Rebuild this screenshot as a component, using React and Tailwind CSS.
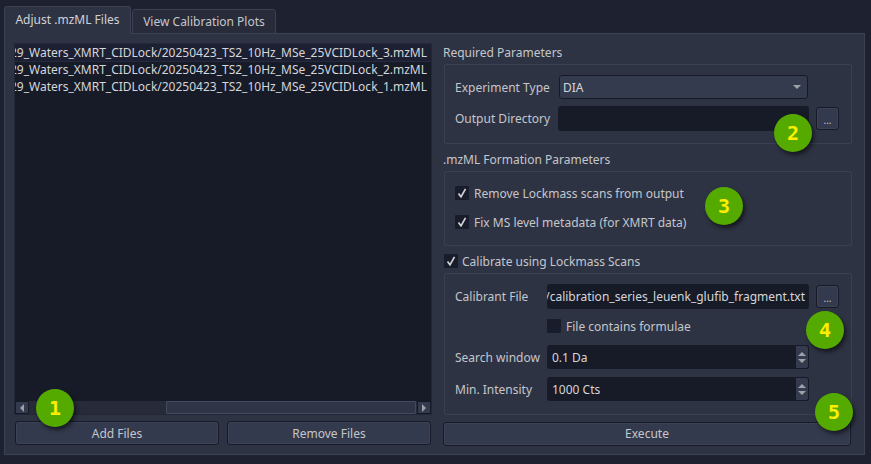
import React from "react";

function Check({ checked = true }) {
  return (
    <span className="w-[14px] h-[14px] bg-[#191d2b] rounded-[1px] flex items-center justify-center shrink-0">
      {checked && (
        <svg width="10" height="10" viewBox="0 0 10 10" fill="none">
          <path d="M1.5 5.5 L4 8.8 L8.5 0.8" stroke="#d3d4d8" strokeWidth="1.7" />
        </svg>
      )}
    </span>
  );
}

function Button({ className, children }) {
  return (
    <div className={"bg-[#343a4d] border border-[#171a26] rounded-[3px] flex items-center justify-center text-[#c4c6cb] shadow-[inset_0_0_0_1px_#3c4257] " + className}>
      {children}
    </div>
  );
}

function Spin({ value, className }) {
  return (
    <div className={"h-[24px] w-[262px] bg-[#171b28] rounded-[3px] flex items-center justify-between text-[#d5d6da] pl-[5px] " + (className || "")}>
      <span>{value}</span>
      <span className="w-[14px] h-[24px] bg-[#353b4e] border border-[#171a26] rounded-r-[3px] flex flex-col items-center justify-center gap-[3px]">
        <span className="w-0 h-0 border-x-[4px] border-x-transparent border-b-[4px] border-b-[#9ea1aa]" />
        <span className="w-0 h-0 border-x-[4px] border-x-transparent border-t-[4px] border-t-[#9ea1aa]" />
      </span>
    </div>
  );
}

function Badge({ n, className }) {
  return (
    <div className={"absolute w-[38px] h-[38px] rounded-full bg-[#55aa00] shadow-[2px_3px_4px_rgba(0,0,0,0.55)] flex items-center justify-center text-[#ffee00] text-[20px] font-bold font-['DejaVu_Sans_Mono',monospace] " + className}>
      {n}
    </div>
  );
}

const Row = ({ n }) => (
  <div className="h-[17px] flex items-center justify-end whitespace-nowrap pr-[4px]">
    29_Waters_XMRT_CIDLock/20250423_TS2_10Hz_MSe_25VCIDLock_{n}.mzML
  </div>
);

export default function App() {
  return (
    <div className="relative w-[871px] h-[464px] bg-[#1e2130] overflow-hidden pt-[6px] pl-[4px] text-[12px] leading-[17px] text-[#c4c6cb] font-['Noto_Sans',sans-serif]">
      <div className="flex items-end h-[28px] -mb-px relative z-10">
        <div className="w-[127px] h-[28px] bg-[#2e3343] border border-[#3b4153] border-b-0 rounded-t-[3px] flex items-center justify-center text-[#d0d1d6] pb-[3px]">
          Adjust .mzML Files
        </div>
        <div className="w-[144px] h-[25px] ml-[1px] bg-[#272b3a] border border-[#3b4153] rounded-t-[3px] flex items-center justify-center text-[#c4c6cb]">
          View Calibration Plots
        </div>
      </div>
      <div className="w-[861px] h-[422px] bg-[#2e3343] border border-[#3b4153] pt-[9px] pl-[9px] flex">
        <div className="w-[418px] flex flex-col">
          <div className="h-[372px] bg-[#171b28] border border-[#232738] flex flex-col">
            <div className="flex-1 min-h-0 overflow-hidden text-[#d5d6da]">
              <div className="bg-[#1d2032] border border-[#262a40] -m-px"><Row n={3} /></div>
              <Row n={2} />
              <Row n={1} />
            </div>
            <div className="h-[14px] flex bg-[#262a39] border-t border-[#171b28]">
              <div className="w-[14px] bg-[#353b4e] border border-[#171a26] flex items-center justify-center">
                <span className="w-0 h-0 border-y-[4px] border-y-transparent border-r-[4px] border-r-[#9ea1aa]" />
              </div>
              <div className="flex-1 ml-[137px] bg-[#2f3446] border border-[#434a5f] rounded-[1px]" />
              <div className="w-[14px] ml-[1px] bg-[#353b4e] border border-[#171a26] flex items-center justify-center">
                <span className="w-0 h-0 border-y-[4px] border-y-transparent border-l-[4px] border-l-[#9ea1aa]" />
              </div>
            </div>
          </div>
          <div className="flex gap-[8px] mt-[6px] pl-[1px] w-[418px]">
            <Button className="w-[204px] h-[24px]">Add Files</Button>
            <Button className="w-[204px] h-[24px]">Remove Files</Button>
          </div>
        </div>

        <div className="ml-[11px] w-[409px] flex flex-col">
          <div className="h-[18px] mb-[3px] flex items-center">Required Parameters</div>
          <div className="h-[80px] ml-[1px] border border-[#3a4053] rounded-[2px] pl-[10px] pt-[10px] flex flex-col">
            <div className="flex items-center h-[24px]">
              <span className="w-[104px]">Experiment Type</span>
              <div className="w-[249px] h-[24px] bg-[#353b4e] border border-[#171a26] rounded-[3px] flex items-center justify-between pl-[3px] pr-[6px] text-[#d5d6da]">
                DIA
                <span className="w-0 h-0 border-x-[4px] border-x-transparent border-t-[4px] border-t-[#9ea1aa]" />
              </div>
            </div>
            <div className="flex items-center h-[25px] mt-[7px]">
              <span className="w-[103px]">Output Directory</span>
              <div className="w-[251px] h-[25px] bg-[#171b28] rounded-[3px]" />
              <Button className="w-[23px] h-[23px] ml-[7px] items-end text-[10px]">...</Button>
            </div>
          </div>

          <div className="h-[20px] mt-[5px] flex items-center">.mzML Formation Parameters</div>
          <div className="h-[75px] ml-[1px] mt-[2px] border border-[#3a4053] rounded-[2px] pl-[10px] pt-[14px] flex flex-col gap-[15px]">
            <label className="flex items-center gap-[5px] h-[14px]"><Check /> Remove Lockmass scans from output</label>
            <label className="flex items-center gap-[5px] h-[14px]"><Check /> Fix MS level metadata (for XMRT data)</label>
          </div>

          <label className="flex items-center gap-[4px] h-[20px] mt-[5px] ml-[1px]"><Check /> Calibrate using Lockmass Scans</label>
          <div className="h-[142px] ml-[1px] mt-[2px] border border-[#3a4053] rounded-[2px] pl-[10px] pt-[10px] flex flex-col">
            <div className="flex items-center h-[25px]">
              <span className="w-[92px]">Calibrant File</span>
              <div className="w-[262px] h-[25px] bg-[#171b28] rounded-[3px] flex items-center justify-end pr-[4px] overflow-hidden whitespace-nowrap text-[#d5d6da]">
                /calibration_series_leuenk_glufib_fragment.txt
              </div>
              <Button className="w-[23px] h-[23px] ml-[7px] items-end text-[10px]">...</Button>
            </div>
            <label className="flex items-center gap-[5px] h-[14px] mt-[10px] ml-[92px]"><Check checked={false} /> File contains formulae</label>
            <div className="flex items-center h-[24px] mt-[12px]">
              <span className="w-[92px]">Search window</span>
              <Spin value="0.1 Da" />
            </div>
            <div className="flex items-center h-[24px] mt-[8px]">
              <span className="w-[92px]">Min. Intensity</span>
              <Spin value="1000 Cts" />
            </div>
          </div>
          <Button className="w-[408px] h-[24px] mt-[7px] pb-[1px]">Execute</Button>
        </div>
      </div>

      <Badge n="1" className="left-[36px] top-[389px]" />
      <Badge n="2" className="left-[774px] top-[114px]" />
      <Badge n="3" className="left-[705px] top-[187px]" />
      <Badge n="4" className="left-[806px] top-[311px]" />
      <Badge n="5" className="left-[815px] top-[393px]" />
    </div>
  );
}
